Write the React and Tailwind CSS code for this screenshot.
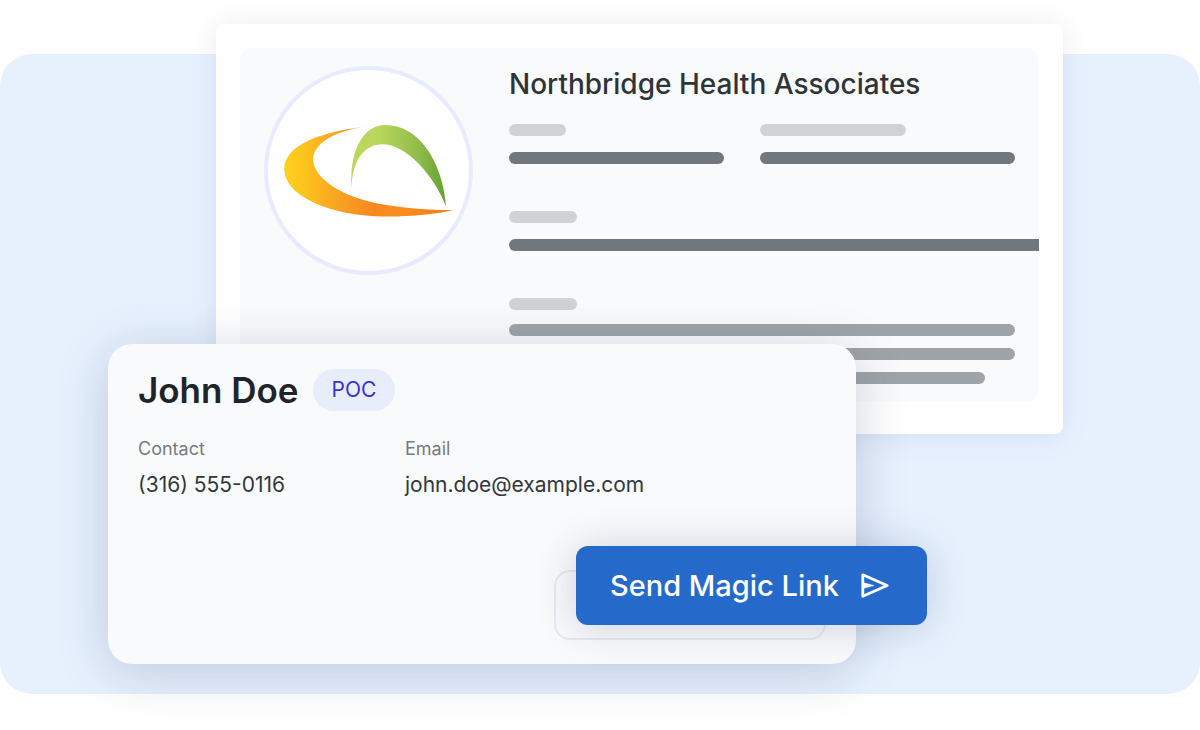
function Bar({ className }) {
  return <div className={`h-3 rounded-full ${className}`} />;
}

function Logo() {
  return (
    <svg viewBox="202 179 606 606" className="size-full" role="img" aria-label="Northbridge Health Associates logo">
      <defs>
        <linearGradient id="swoosh" gradientUnits="userSpaceOnUse" x1="251" y1="0" x2="762" y2="0">
          <stop offset="0" stopColor="#ffd01c" />
          <stop offset="0.12" stopColor="#fdc41d" />
          <stop offset="0.24" stopColor="#fbae20" />
          <stop offset="0.38" stopColor="#f89a22" />
          <stop offset="0.52" stopColor="#f78820" />
          <stop offset="0.7" stopColor="#fb8c1c" />
          <stop offset="1" stopColor="#f47a10" />
        </linearGradient>
        <linearGradient id="arch" gradientUnits="userSpaceOnUse" x1="452" y1="0" x2="740" y2="0">
          <stop offset="0" stopColor="#bcd85a" />
          <stop offset="0.3" stopColor="#b8d65c" />
          <stop offset="0.7" stopColor="#90bd4a" />
          <stop offset="1" stopColor="#64a033" />
        </linearGradient>
      </defs>
      <path
        d="M488 351C372 364 251 403 251 477C251 560 392 621 560 621C640 621 710 612 762 602C640 600 540 590 462 562C385 533 338 489 338 449C338 403 398 365 488 351Z"
        fill="url(#swoosh)"
      />
      <path
        d="M454 535C447 430 484 345 557 345C652 345 727 447 739 591C702 495 618 403 547 403C493 403 456 450 454 535Z"
        fill="url(#arch)"
      />
    </svg>
  );
}

function SendIcon() {
  return (
    <svg viewBox="0 0 28 25" className="h-[25px] w-7" fill="none" stroke="currentColor" strokeLinejoin="round" aria-hidden="true">
      <path d="M1.800 1.800L26.200 12.500L1.800 23.200Z" strokeWidth="2.800" />
      <path d="M2 9.600L13 12.500L2 15.400Z" fill="currentColor" strokeWidth="0.500" />
    </svg>
  );
}

function CompanyCard() {
  return (
    <article className="-mt-[30px] ml-[18%] w-[70.6%] rounded-lg bg-white px-6 pt-6 pb-8 shadow-[0_2px_28px_rgba(60,60,150,0.10)]">
      <div className="flex gap-9 overflow-hidden rounded-xl bg-[#f9fafc] py-[18px] pl-6">
        <div className="size-[209px] shrink-0 overflow-hidden rounded-full border-4 border-[#e8eaff] bg-white">
          <Logo />
        </div>
        <div className="min-w-0 flex-1">
          <h1 className="text-[28px] leading-9 font-medium whitespace-nowrap text-[#2f3439]">Northbridge Health Associates</h1>
          <div className="mt-[22px] mr-6 grid grid-cols-[215fr_255fr] gap-9">
            <div className="flex flex-col gap-4">
              <Bar className="w-[57px] bg-[#d0d3d6]" />
              <Bar className="bg-[#70777d]" />
            </div>
            <div className="flex flex-col gap-4">
              <Bar className="w-[146px] bg-[#d0d3d6]" />
              <Bar className="bg-[#70777d]" />
            </div>
          </div>
          <div className="mt-[47px] flex flex-col gap-4">
            <Bar className="w-[68px] bg-[#d0d3d6]" />
            <Bar className="-mr-6 bg-[#70777d]" />
          </div>
          <div className="mt-[47px] mr-6 flex flex-col gap-3">
            <Bar className="mb-0.5 w-[68px] bg-[#d0d3d6]" />
            <Bar className="bg-[#9fa4a8]" />
            <Bar className="bg-[#9fa4a8]" />
            <Bar className="mr-[30px] bg-[#9fa4a8]" />
          </div>
        </div>
      </div>
    </article>
  );
}

function ContactCard() {
  return (
    <article className="relative -mt-[90px] ml-[9%] w-[62.33%] rounded-3xl bg-[#f9fafc] px-[30px] pt-[25px] pb-6 shadow-[0_8px_52px_rgba(20,40,80,0.20)]">
      <div className="flex items-center gap-3.5">
        <h2 className="text-[35px] leading-10 font-semibold text-[#1e242a]">John Doe</h2>
        <span className="rounded-full bg-[#e7edfa] px-[19px] text-[21px] leading-[42px] text-[#3a32d1]">POC</span>
      </div>
      <dl className="mt-[26px] grid grid-cols-[267px_1fr]">
        <div>
          <dt className="text-lg leading-6 text-[#757b81]">Contact</dt>
          <dd className="mt-2 text-[21px] leading-8 text-[#32373c]">(316) 555-0116</dd>
        </div>
        <div>
          <dt className="text-lg leading-6 text-[#757b81]">Email</dt>
          <dd className="mt-2 text-[21px] leading-8 text-[#32373c]">john.doe@example.com</dd>
        </div>
      </dl>
      <div className="mt-[69px] ml-auto h-[70px] w-[272px] rounded-2xl border-2 border-[#e7e9f1]" />
      <button
        type="button"
        className="absolute -right-[71px] bottom-[39px] flex h-[79px] w-[351px] items-center gap-[22px] rounded-xl bg-[#256acb] pl-[34px] text-[29px] font-medium whitespace-nowrap text-white shadow-[0_2px_40px_rgba(20,40,80,0.20)]"
      >
        Send Magic Link
        <SendIcon />
      </button>
    </article>
  );
}

export default function App() {
  return (
    <main className="overflow-x-clip bg-white pt-[54px] pb-9 font-['Inter',sans-serif]">
      <section className="flow-root rounded-[32px] bg-[#e7f1fe] pb-[30px]">
        <CompanyCard />
        <ContactCard />
      </section>
    </main>
  );
}
